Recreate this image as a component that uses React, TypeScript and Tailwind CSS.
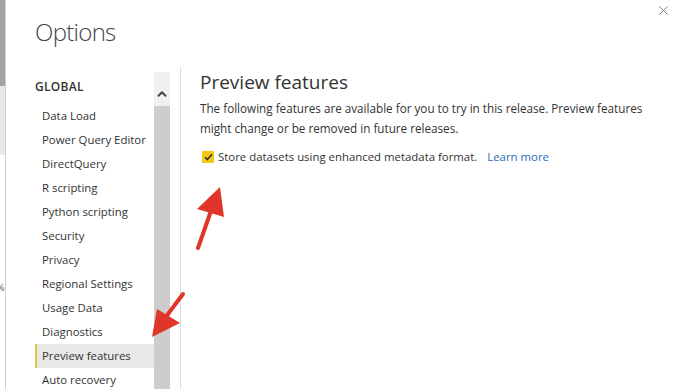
import { ChevronUp, X } from 'lucide-react'

const NAV = [
  'Data Load',
  'Power Query Editor',
  'DirectQuery',
  'R scripting',
  'Python scripting',
  'Security',
  'Privacy',
  'Regional Settings',
  'Usage Data',
  'Diagnostics',
  'Preview features',
  'Auto recovery',
]

const ACTIVE = 'Preview features'

function Arrows() {
  // red annotation arrows drawn over the screenshot
  return (
    <svg className="absolute inset-0 pointer-events-none" width={678} height={389}>
      <line x1={198} y1={248} x2={212} y2={208} stroke="#e0352b" strokeWidth={4} strokeLinecap="round" />
      <polygon points="220,187 197,209 224,217" fill="#e0352b" />
      <line x1={183} y1={294} x2={165} y2={318} stroke="#e0352b" strokeWidth={4} strokeLinecap="round" />
      <polygon points="152,337 157,309 180,323" fill="#e0352b" />
    </svg>
  )
}

export default function App() {
  return (
    <div
      className="relative flex w-[678px] h-[389px] overflow-hidden bg-white text-[#333]"
      style={{ fontFamily: '"Open Sans", "Noto Sans", sans-serif' }}
    >
      {/* window behind the dialog */}
      <div className="flex flex-col w-[5px] shrink-0">
        <div className="h-[86px] bg-[#a3a3a3]" />
        <div className="h-[69px] bg-[#e8e8e8]" />
        <div className="flex-1 bg-white pt-[128px] text-[9px] leading-none text-[#555] overflow-hidden">
          <span className="-ml-[3px]">%</span>
        </div>
      </div>
      <div className="w-px shrink-0 bg-[#cfcfcf]" />

      {/* dialog */}
      <div className="flex-1 flex flex-col pl-[29px]">
        <div className="flex items-start justify-between">
          <h1 className="mt-[15px] text-[24px] leading-[34px] font-light tracking-[-0.7px] text-[#444]">Options</h1>
          <X className="mt-[3px] mr-[7px] text-[#666]" size={15} strokeWidth={1.3} />
        </div>

        <div className="flex flex-1 mt-[23px] min-h-0">
          {/* nav */}
          <div className="w-[119px] shrink-0 flex flex-col">
            <div className="h-[32px] shrink-0 pt-[6px] text-[12px] font-semibold tracking-[0.3px] text-[#333]">
              GLOBAL
            </div>
            {NAV.map(item => (
              <div
                key={item}
                className={
                  item === ACTIVE
                    ? 'h-[24px] shrink-0 flex items-center pl-[5px] text-[11.4px] border-l-2 border-[#e8c440] bg-[#e9e9e9]'
                    : 'h-[24px] shrink-0 flex items-center pl-[7px] text-[11.4px]'
                }
              >
                {item}
              </div>
            ))}
          </div>

          {/* scrollbar */}
          <div className="w-[16px] shrink-0 flex flex-col">
            <div className="h-[34px] bg-[#f0f0f0] flex items-center justify-center pt-[9px]">
              <ChevronUp size={14} strokeWidth={3.2} className="text-[#444]" />
            </div>
            <div className="flex-1 bg-[#cdcdcd]" />
          </div>

          <div className="w-[10px] shrink-0" />
          <div className="w-px shrink-0 bg-[#dcdcdc] -mt-[5px]" />

          {/* content */}
          <div className="flex-1 pl-[19px] -mt-px">
            <h2 className="text-[19px] leading-[22px] text-[#333]">Preview features</h2>
            <p className="mt-[5px] text-[11.7px] leading-[20px] text-[#333] w-[460px]">
              The following features are available for you to try in this release. Preview features might change or be removed in future releases.
            </p>
            <label className="mt-[11px] flex items-center text-[11.4px] leading-[16px]">
              <span className="ml-[2px] w-[12px] h-[12px] bg-[#f2c811] flex items-center justify-center">
                <svg width={9} height={8} viewBox="0 0 9 8">
                  <path d="M1 4.2 L3.4 6.6 L8 1.2" fill="none" stroke="#333" strokeWidth={1.6} />
                </svg>
              </span>
              <span className="ml-[4px]">Store datasets using enhanced metadata format.</span>
              <span className="ml-[10px] text-[#2b6cb3]">Learn more</span>
            </label>
          </div>
        </div>
      </div>

      <Arrows />
    </div>
  )
}
